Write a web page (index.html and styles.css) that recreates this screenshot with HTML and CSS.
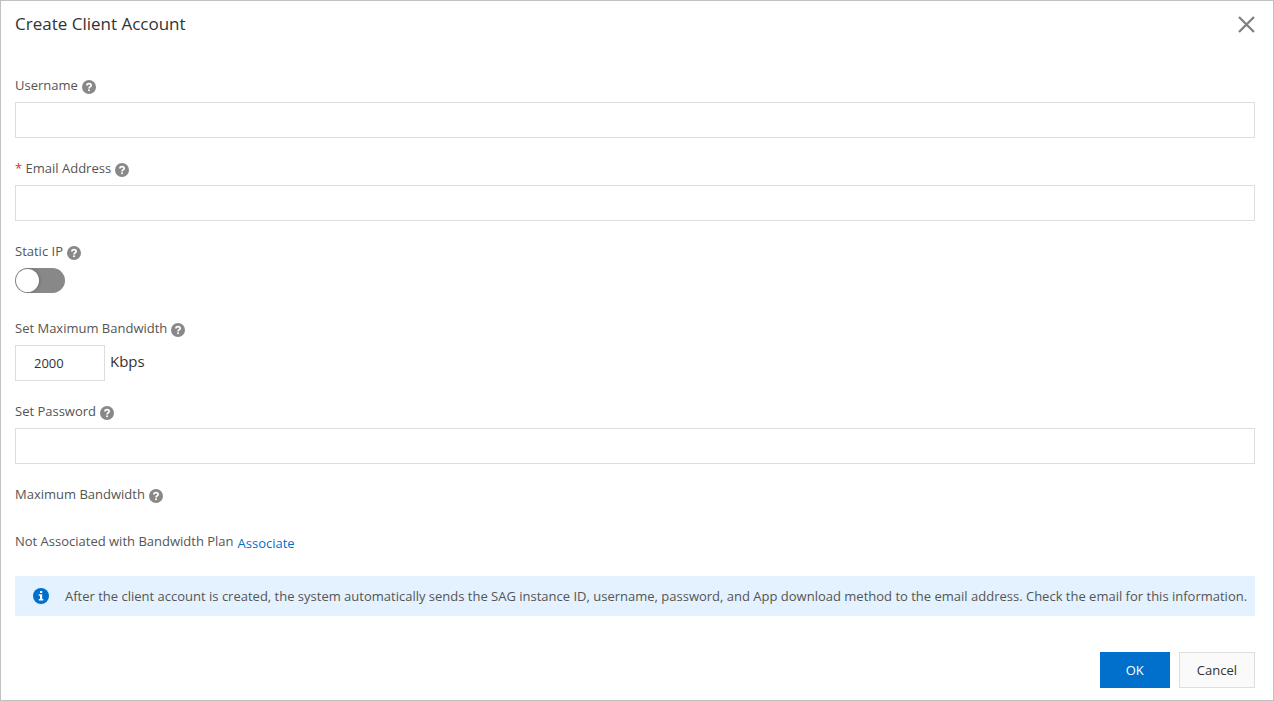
FILE: index.html
```html
<!DOCTYPE html>
<html lang="en">
<head>
    <meta charset="UTF-8">
    <meta name="viewport" content="width=device-width, initial-scale=1.0">
    <title>Create Client Account</title>
    <link rel="stylesheet" href="styles.css">
</head>
<body>

<!-- Question mark shared by all the labels -->
<svg class="sprite" aria-hidden="true">
    <symbol id="icon-help" viewBox="0 0 14 14">
        <circle cx="7" cy="7" r="7" fill="#888"/>
        <path d="M4.9 5.6C4.9 3 9.2 3 9.2 5.4C9.2 6.8 7 6.8 7 8.5" fill="none" stroke="#fff" stroke-width="1.7"/>
        <rect x="6.1" y="9.4" width="1.8" height="1.7" fill="#fff"/>
    </symbol>
</svg>

<form class="dialog">
    <header class="dialog-header">
        <h1>Create Client Account</h1>
        <button type="button" class="close-btn" aria-label="Close">
            <svg width="17" height="17" viewBox="0 0 17 17"><path d="M1 1L16 16M16 1L1 16" stroke="#808080" stroke-width="2.3"/></svg>
        </button>
    </header>

    <main class="dialog-body">
        <div class="field">
            <div class="field-label">
                <label for="username">Username</label>
                <svg class="help"><use href="#icon-help"/></svg>
            </div>
            <input type="text" id="username" class="text-input">
        </div>

        <div class="field">
            <div class="field-label">
                <label for="email"><span class="required">*</span> Email Address</label>
                <svg class="help"><use href="#icon-help"/></svg>
            </div>
            <input type="email" id="email" class="text-input" required>
        </div>

        <div class="field">
            <div class="field-label">
                <label for="static-ip">Static IP</label>
                <svg class="help"><use href="#icon-help"/></svg>
            </div>
            <div class="switch-row">
                <input type="checkbox" id="static-ip" class="switch" role="switch">
            </div>
        </div>

        <div class="field">
            <div class="field-label">
                <label for="bandwidth">Set Maximum Bandwidth</label>
                <svg class="help"><use href="#icon-help"/></svg>
            </div>
            <div class="bandwidth-row">
                <input type="text" id="bandwidth" class="text-input bandwidth-input" value="2000">
                <span class="unit">Kbps</span>
            </div>
        </div>

        <div class="field">
            <div class="field-label">
                <label for="password">Set Password</label>
                <svg class="help"><use href="#icon-help"/></svg>
            </div>
            <input type="password" id="password" class="text-input">
        </div>

        <div class="field">
            <div class="field-label">
                <span>Maximum Bandwidth</span>
                <svg class="help"><use href="#icon-help"/></svg>
            </div>
        </div>

        <div class="plan">
            <span>Not Associated with Bandwidth Plan</span>
            <a href="#">Associate</a>
        </div>

        <div class="notice">
            <svg class="notice-icon" viewBox="0 0 16 16">
                <circle cx="8" cy="8" r="8" fill="#0070cc"/>
                <path d="M7 3H9.2V5H7ZM5.8 6.3H9.2V11H10.3V12.4H5.8V11H7V7.7H5.8Z" fill="#fff"/>
            </svg>
            <p>After the client account is created, the system automatically sends the SAG instance ID, username, password, and App download method to the email address. Check the email for this information.</p>
        </div>
    </main>

    <footer class="dialog-footer">
        <button type="submit" class="btn btn-primary">OK</button>
        <button type="button" class="btn">Cancel</button>
    </footer>
</form>

</body>
</html>
```

FILE: styles.css
```css
* {
    box-sizing: border-box;
}

body {
    margin: 0;
    font-family: "Open Sans", "Noto Sans", sans-serif;
    font-size: 13px;
    line-height: 20px;
    color: #555;
    background: #fff;
}

.sprite {
    display: none;
}

.dialog {
    display: flex;
    flex-direction: column;
    min-height: 100vh;
    padding: 10px 18px 12px 14px;
    border: 1px solid #c1c1c1;
}

.dialog-header {
    display: flex;
    justify-content: space-between;
    align-items: center;
    height: 26px;
    margin-bottom: 39px;
}

.dialog-header h1 {
    margin: 0;
    font-size: 17px;
    font-weight: normal;
    color: #333;
}

.close-btn {
    display: flex;
    padding: 0;
    border: none;
    background: none;
    cursor: pointer;
}

.dialog-body {
    flex: 1;
}

.field {
    margin-bottom: 21px;
}

.field-label {
    display: flex;
    gap: 4px;
    height: 20px;
    margin-bottom: 6px;
    line-height: 18px;
}

.required {
    color: #d93026;
}

.help {
    width: 14px;
    height: 14px;
    margin-top: 4px;
}

.text-input {
    display: block;
    width: 100%;
    height: 36px;
    padding: 0 18px;
    border: 1px solid #dedede;
    font: inherit;
    color: #333;
    background: #fff;
}

.switch-row {
    height: 30px;
}

.switch {
    appearance: none;
    display: block;
    width: 50px;
    height: 25px;
    margin: 0;
    padding: 1px;
    border-radius: 13px;
    background: #888;
    cursor: pointer;
}

.switch::before {
    content: "";
    display: block;
    width: 23px;
    height: 23px;
    border-radius: 50%;
    background: #fff;
    box-shadow: 1px 0 3px rgba(0, 0, 0, 0.2);
}

.switch:checked {
    background: #0070cc;
}

.switch:checked::before {
    margin-left: auto;
}

.bandwidth-row {
    display: flex;
    gap: 5px;
}

.bandwidth-input {
    width: 90px;
}

.unit {
    font-size: 15px;
    line-height: 32px;
    color: #333;
}

.plan {
    display: flex;
    gap: 4px;
    margin-bottom: 23px;
    padding-top: 5px;
}

.plan a {
    padding-top: 2px;
    color: #0070cc;
    text-decoration: none;
}

.notice {
    display: flex;
    align-items: center;
    gap: 16px;
    min-height: 40px;
    padding: 0 6px 0 18px;
    background: #e3f2fe;
}

.notice-icon {
    flex: none;
    width: 16px;
    height: 16px;
}

.notice p {
    margin: 0;
}

.dialog-footer {
    display: flex;
    justify-content: flex-end;
    gap: 9px;
    margin-top: 36px;
}

.btn {
    min-width: 70px;
    height: 36px;
    padding: 0 17px;
    border: 1px solid #dedede;
    font: inherit;
    color: #333;
    background: #fafafa;
    cursor: pointer;
}

.btn-primary {
    border-color: #0070cc;
    color: #fff;
    background: #0070cc;
}
```
